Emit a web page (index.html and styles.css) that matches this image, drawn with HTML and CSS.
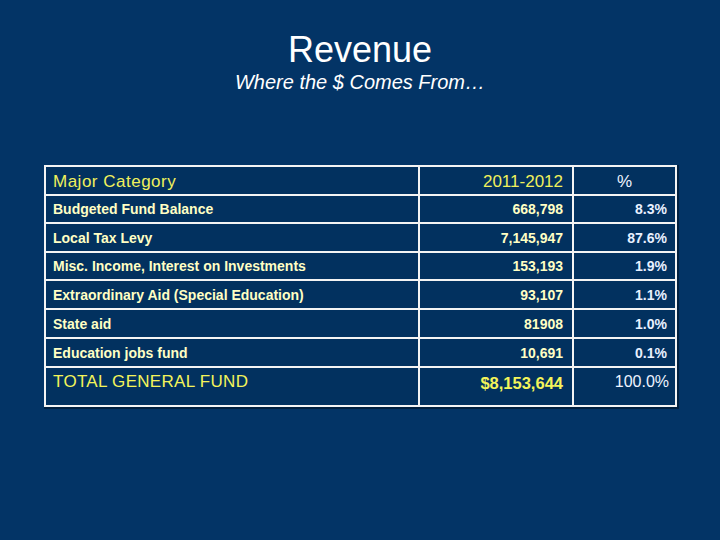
FILE: index.html
```html
<!DOCTYPE html>
<html>
<head>
<meta charset="utf-8">
<link rel="stylesheet" href="styles.css">
</head>
<body>
<div class="slide">
  <h1 class="title">Revenue</h1>
  <p class="subtitle">Where the $ Comes From…</p>
  <div class="grid">
    <div class="cell head cat">Major Category</div>
    <div class="cell head num">2011-2012</div>
    <div class="cell head pct-h">%</div>

    <div class="cell row cat">Budgeted Fund Balance</div>
    <div class="cell row num">668,798</div>
    <div class="cell row pct">8.3%</div>

    <div class="cell row cat">Local Tax Levy</div>
    <div class="cell row num">7,145,947</div>
    <div class="cell row pct">87.6%</div>

    <div class="cell row cat">Misc. Income, Interest on Investments</div>
    <div class="cell row num">153,193</div>
    <div class="cell row pct">1.9%</div>

    <div class="cell row cat">Extraordinary Aid (Special Education)</div>
    <div class="cell row num">93,107</div>
    <div class="cell row pct">1.1%</div>

    <div class="cell row cat">State aid</div>
    <div class="cell row num">81908</div>
    <div class="cell row pct">1.0%</div>

    <div class="cell row cat">Education jobs fund</div>
    <div class="cell row num">10,691</div>
    <div class="cell row pct">0.1%</div>

    <div class="cell total cat">TOTAL GENERAL FUND</div>
    <div class="cell total num">$8,153,644</div>
    <div class="cell total pct">100.0%</div>
  </div>
</div>
</body>
</html>
```

FILE: styles.css
```css
html, body {
  margin: 0;
  padding: 0;
  background: #033466;
}
.slide {
  width: 720px;
  height: 540px;
  background: #033466;
  font-family: "Liberation Sans", Arial, sans-serif;
  padding-top: 30px;
  box-sizing: border-box;
}
.title {
  margin: 0;
  font-weight: normal;
  font-size: 36px;
  line-height: 40px;
  color: #ffffff;
  text-align: center;
}
.subtitle {
  margin: 1px 0 0;
  font-style: italic;
  font-size: 20px;
  line-height: 22px;
  color: #ffffff;
  text-align: center;
}
.grid {
  margin: 72px 0 0 44px;
  width: 633px;
  box-sizing: border-box;
  display: grid;
  grid-template-columns: 372px 152px 101px;
  grid-template-rows: 27px 26px 27px 26px 27px 27px 27px 37px;
  gap: 2px;
  padding: 2px;
  background: #f4f4f4;
  box-shadow: 1px 1px 0 1px #01203f;
}
.cell {
  background: #02315f;
  display: flex;
  box-sizing: border-box;
  white-space: nowrap;
}
.cat { padding-left: 7px; justify-content: flex-start; }
.num { padding-right: 9px; justify-content: flex-end; }
.pct { padding-right: 8px; justify-content: flex-end; }
.pct-h { justify-content: center; }

.head {
  font-size: 17px;
  line-height: 20px;
  padding-top: 5px;
  align-items: flex-start;
  color: #f0f05c;
}
.head.cat { letter-spacing: 0.5px; }
.head.pct-h { color: #eef4ff; padding-left: 0; }

.row {
  font-size: 14px;
  font-weight: bold;
  line-height: 16px;
  align-items: center;
  color: #ffffc4;
}
.row.pct { color: #e8f0ff; }

.total {
  font-size: 17px;
  line-height: 20px;
  padding-top: 4px;
  align-items: flex-start;
  color: #f4f45a;
}
.total.cat { letter-spacing: 0.3px; }
.total.num { font-size: 16.5px; font-weight: bold; padding-top: 5px; }
.total.pct { font-size: 16px; color: #eef4ff; padding-top: 4px; padding-right: 6px; }
```
